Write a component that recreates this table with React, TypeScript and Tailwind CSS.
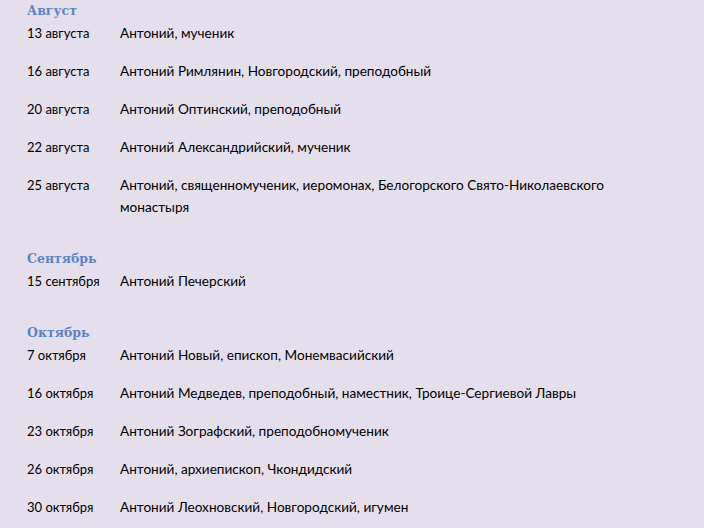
const sections = [
  {
    title: "Август",
    items: [
      ["13 августа", "Антоний, мученик"],
      ["16 августа", "Антоний Римлянин, Новгородский, преподобный"],
      ["20 августа", "Антоний Оптинский, преподобный"],
      ["22 августа", "Антоний Александрийский, мученик"],
      ["25 августа", "Антоний, священномученик, иеромонах, Белогорского Свято-Николаевского монастыря"],
    ],
  },
  {
    title: "Сентябрь",
    items: [["15 сентября", "Антоний Печерский"]],
  },
  {
    title: "Октябрь",
    items: [
      ["7 октября", "Антоний Новый, епископ, Монемвасийский"],
      ["16 октября", "Антоний Медведев, преподобный, наместник, Троице-Сергиевой Лавры"],
      ["23 октября", "Антоний Зографский, преподобномученик"],
      ["26 октября", "Антоний, архиепископ, Чкондидский"],
      ["30 октября", "Антоний Леохновский, Новгородский, игумен"],
    ],
  },
]

export default function App() {
  return (
    <div className="min-h-[528px] w-[704px] overflow-hidden bg-[#e5dfec] pl-[27px] text-[13px] leading-[22px] text-black [font-family:Lato,'Noto_Sans',sans-serif]">
      {sections.map((section, i) => (
        <div key={section.title} className={i > 0 ? "pt-[14px]" : ""}>
          <h2 className="text-[12.5px] font-bold leading-[22px] text-[#5a86c0] [font-family:'DejaVu_Serif',serif]">
            {section.title}
          </h2>
          {section.items.map(([date, name]) => (
            <div key={date} className="mb-4 flex">
              <div className="w-[93px] shrink-0">{date}</div>
              <div className="w-[500px] text-[13.6px]">{name}</div>
            </div>
          ))}
        </div>
      ))}
    </div>
  )
}
